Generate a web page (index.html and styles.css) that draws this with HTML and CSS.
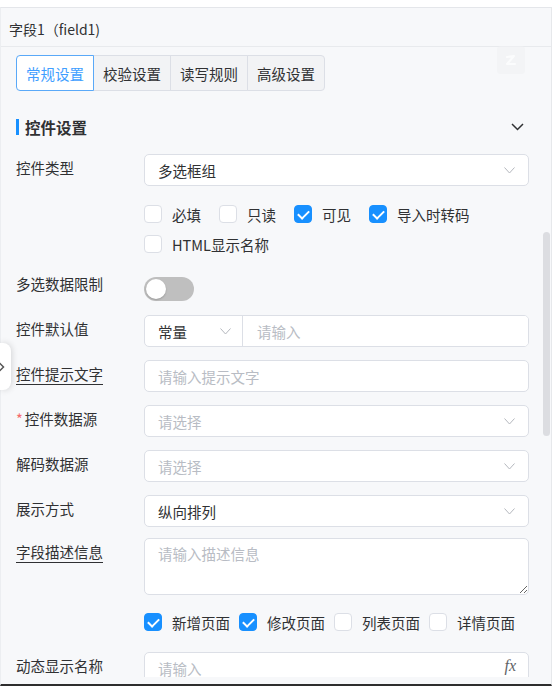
FILE: index.html
```html
<!DOCTYPE html>
<html lang="zh-CN">
<head>
    <meta charset="UTF-8">
    <meta name="viewport" content="width=device-width, initial-scale=1.0">
    <title>字段属性</title>
    <link rel="stylesheet" href="styles.css">
</head>
<body>
    <div class="panel">
        <div class="panel-title">字段1（field1)</div>
        <span class="ghost-btn">
            <svg width="16" height="16" viewBox="0 0 16 16"><path d="M4 5 L11 4 L4 12 L12 12" stroke="#fff" stroke-width="2" fill="none" stroke-linecap="round" stroke-linejoin="round"/></svg>
        </span>

        <div class="panel-body">
            <div class="tabs">
                <button class="tab active">常规设置</button>
                <button class="tab">校验设置</button>
                <button class="tab">读写规则</button>
                <button class="tab">高级设置</button>
            </div>

            <div class="section-head">
                <span class="section-title">控件设置</span>
                <svg class="section-arrow" width="13" height="8" viewBox="0 0 13 8"><polyline points="1,1 6.5,6.5 12,1" fill="none" stroke="#303133" stroke-width="1.5"/></svg>
            </div>

            <div class="form-item">
                <span class="item-label">控件类型</span>
                <div class="select">
                    <span>多选框组</span>
                    <svg class="arrow" width="11" height="7" viewBox="0 0 11 7"><polyline points="0.5,0.5 5.5,6 10.5,0.5" fill="none" stroke="#b4b7bd" stroke-width="1"/></svg>
                </div>
            </div>

            <div class="form-item mb-11">
                <span class="item-label"></span>
                <div class="check-group">
                    <label class="check"><span class="box"></span>必填</label>
                    <label class="check"><span class="box"></span>只读</label>
                    <label class="check"><span class="box on"></span>可见</label>
                    <label class="check"><span class="box on"></span>导入时转码</label>
                    <label class="check"><span class="box"></span>HTML显示名称</label>
                </div>
            </div>

            <div class="form-item mb-14">
                <span class="item-label">多选数据限制</span>
                <div><span class="switch"><span class="knob"></span></span></div>
            </div>

            <div class="form-item">
                <span class="item-label">控件默认值</span>
                <div class="combo">
                    <div class="combo-select">
                        <span>常量</span>
                        <svg class="arrow" width="11" height="7" viewBox="0 0 11 7"><polyline points="0.5,0.5 5.5,6 10.5,0.5" fill="none" stroke="#b4b7bd" stroke-width="1"/></svg>
                    </div>
                    <input class="combo-input" placeholder="请输入">
                </div>
            </div>

            <div class="form-item">
                <span class="item-label"><span class="tip">控件提示文字</span></span>
                <input class="input" placeholder="请输入提示文字">
            </div>

            <div class="form-item">
                <span class="item-label"><span class="star">*</span>控件数据源</span>
                <div class="select">
                    <span class="placeholder">请选择</span>
                    <svg class="arrow" width="11" height="7" viewBox="0 0 11 7"><polyline points="0.5,0.5 5.5,6 10.5,0.5" fill="none" stroke="#b4b7bd" stroke-width="1"/></svg>
                </div>
            </div>

            <div class="form-item">
                <span class="item-label">解码数据源</span>
                <div class="select">
                    <span class="placeholder">请选择</span>
                    <svg class="arrow" width="11" height="7" viewBox="0 0 11 7"><polyline points="0.5,0.5 5.5,6 10.5,0.5" fill="none" stroke="#b4b7bd" stroke-width="1"/></svg>
                </div>
            </div>

            <div class="form-item mb-11">
                <span class="item-label">展示方式</span>
                <div class="select">
                    <span>纵向排列</span>
                    <svg class="arrow" width="11" height="7" viewBox="0 0 11 7"><polyline points="0.5,0.5 5.5,6 10.5,0.5" fill="none" stroke="#b4b7bd" stroke-width="1"/></svg>
                </div>
            </div>

            <div class="form-item mb-12">
                <span class="item-label"><span class="tip">字段描述信息</span></span>
                <textarea class="textarea" placeholder="请输入描述信息"></textarea>
            </div>

            <div class="form-item mb-15">
                <span class="item-label"></span>
                <div class="check-group tight">
                    <label class="check"><span class="box on"></span>新增页面</label>
                    <label class="check"><span class="box on"></span>修改页面</label>
                    <label class="check"><span class="box"></span>列表页面</label>
                    <label class="check"><span class="box"></span>详情页面</label>
                </div>
            </div>

            <div class="form-item">
                <span class="item-label">动态显示名称</span>
                <div class="input-wrap">
                    <input class="input" placeholder="请输入">
                    <i class="fx">fx</i>
                </div>
            </div>
        </div>

        <div class="scroll-thumb"></div>
    </div>

    <div class="side-handle">
        <svg width="8" height="14" viewBox="0 0 8 14"><polyline points="0.5,2 5.5,7 0.5,12" fill="none" stroke="#555" stroke-width="1.5"/></svg>
    </div>
</body>
</html>
```

FILE: styles.css
```css
* {
    box-sizing: border-box;
}
body {
    margin: 0;
    background: #fff;
    font-family: "Noto Sans CJK SC", sans-serif;
    font-size: 14.5px;
    color: #303133;
}
.panel {
    position: relative;
    width: 552px;
    height: 679px;
    margin-top: 7px;
    background: #f7f8fa;
    border-top: 1px solid #e4e6ea;
    border-left: 1px solid #eceef1;
    border-right: 1px solid #e6e8eb;
    border-bottom: 2px solid #2e2e2e;
}
.panel-title {
    height: 39px;
    padding: 11px 8px 0;
    line-height: 20px;
    font-size: 14px;
    border-bottom: 1px solid #e8eaed;
}
/* faded edit button sitting on the title divider */
.ghost-btn {
    position: absolute;
    top: 38px;
    left: 496px;
    width: 28px;
    height: 28px;
    display: flex;
    justify-content: center;
    align-items: center;
    background: #f1f2f4;
    border-radius: 4px;
    opacity: 0.6;
}
.panel-body {
    height: 630px;
    overflow: hidden;
    padding: 8px 0 0 15px;
}

/* tabs */
.tabs {
    display: flex;
    height: 36px;
}
.tab {
    width: 78px;
    height: 36px;
    margin-left: -1px;
    padding: 0;
    font-family: inherit;
    font-size: 14.5px;
    color: #303133;
    background: #f2f3f5;
    border: 1px solid #dcdfe6;
    cursor: pointer;
}
.tab:first-child {
    margin-left: 0;
    border-radius: 4px 0 0 4px;
}
.tab:last-child {
    border-radius: 0 4px 4px 0;
}
.tab.active {
    position: relative;
    color: #409eff;
    background: #fff;
    border-color: #5aa9f8;
}

/* section header */
.section-head {
    display: flex;
    justify-content: space-between;
    align-items: center;
    width: 514px;
    height: 22px;
    margin: 25px 0 16px;
}
.section-title {
    border-left: 3px solid #1890ff;
    padding-left: 6px;
    line-height: 16px;
    font-size: 15.5px;
    font-weight: bold;
}
.section-arrow {
    margin-right: 6px;
}

/* form rows */
.form-item {
    display: grid;
    grid-template-columns: 128px 385px;
    align-items: start;
    margin-bottom: 13px;
}
.mb-11 { margin-bottom: 11px; }
.mb-12 { margin-bottom: 12px; }
.mb-14 { margin-bottom: 14px; }
.mb-15 { margin-bottom: 15px; }
.item-label {
    line-height: 28px;
    white-space: nowrap;
}
.tip {
    text-decoration: underline;
    text-underline-offset: 4px;
    text-decoration-thickness: 1px;
}
.star {
    color: #f56c6c;
    margin-right: 2px;
}

.select,
.input,
.combo,
.textarea {
    height: 32px;
    background: #fff;
    border: 1px solid #dcdfe6;
    border-radius: 5px;
}
.select {
    display: flex;
    justify-content: space-between;
    align-items: center;
    padding: 0 13px;
}
.placeholder {
    color: #b8bcc4;
}
.input {
    width: 100%;
    padding: 0 13px;
    font-family: inherit;
    font-size: 14.5px;
    color: #303133;
    outline: none;
}
.input::placeholder,
.combo-input::placeholder,
.textarea::placeholder {
    color: #b8bcc4;
}
.input-wrap {
    position: relative;
}
.fx {
    position: absolute;
    right: 13px;
    top: 5px;
    font-family: "Liberation Serif", serif;
    font-size: 16px;
    color: #606266;
}

.combo {
    display: flex;
    overflow: hidden;
}
.combo-select {
    display: flex;
    justify-content: space-between;
    align-items: center;
    width: 98px;
    padding: 0 11px 0 13px;
    border-right: 1px solid #dcdfe6;
}
.combo-input {
    flex: 1;
    border: none;
    padding: 0 14px;
    font-family: inherit;
    font-size: 14.5px;
    outline: none;
}

.textarea {
    height: 57px;
    padding: 4px 13px;
    font-family: inherit;
    font-size: 14.5px;
    line-height: 22px;
    resize: vertical;
    outline: none;
}

/* checkboxes */
.check-group {
    display: flex;
    flex-wrap: wrap;
    column-gap: 18px;
}
.check-group.tight {
    column-gap: 9px;
}
.check {
    display: flex;
    align-items: center;
    height: 30px;
    cursor: pointer;
}
.box {
    position: relative;
    width: 18px;
    height: 18px;
    margin-right: 10px;
    background: #fff;
    border: 1px solid #dcdfe6;
    border-radius: 4px;
}
.box.on {
    background: #1890ff;
    border-color: #1890ff;
}
.box.on::after {
    content: "";
    position: absolute;
    left: 5px;
    top: 2px;
    width: 5px;
    height: 9px;
    border: solid #fff;
    border-width: 0 2px 2px 0;
    transform: rotate(45deg);
}

/* switch */
.switch {
    display: block;
    position: relative;
    width: 50px;
    height: 24px;
    margin-top: 7px;
    background: #bfbfbf;
    border-radius: 12px;
}
.knob {
    position: absolute;
    left: 2px;
    top: 2px;
    width: 20px;
    height: 20px;
    background: #fff;
    border-radius: 50%;
    box-shadow: 0 1px 2px rgba(0, 0, 0, 0.2);
}

.scroll-thumb {
    position: absolute;
    left: 542px;
    top: 224px;
    width: 7px;
    height: 204px;
    background: #dcdde1;
    border-radius: 4px;
}

.side-handle {
    position: absolute;
    left: 0;
    top: 343px;
    width: 11px;
    height: 47px;
    background: #fff;
    border-radius: 0 8px 8px 0;
    box-shadow: 1px 0 6px rgba(0, 0, 0, 0.15);
    overflow: hidden;
}
.side-handle svg {
    position: absolute;
    left: -2px;
    top: 17px;
}
```
